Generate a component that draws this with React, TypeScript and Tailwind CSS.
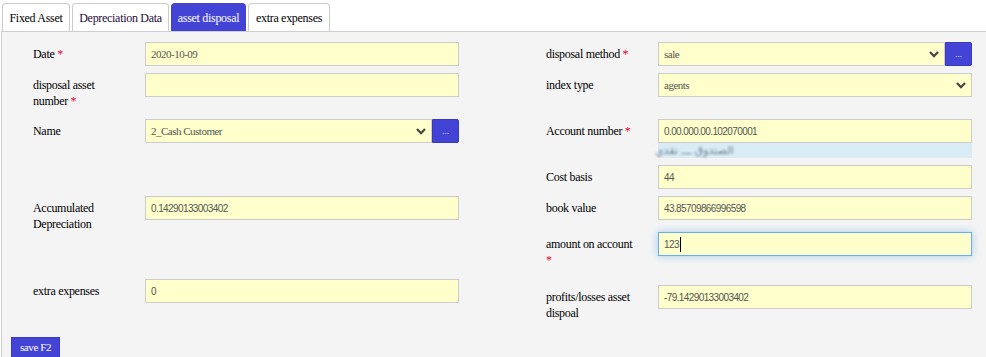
import React from "react";

const serif = "font-[family-name:Liberation_Serif,serif]";
const sans = "font-[family-name:Liberation_Sans,Arial,sans-serif]";

function Req() {
  return <span className="text-[#e4002b]"> *</span>;
}

function Label({ children }: { children: React.ReactNode }) {
  return (
    <div className={`w-[112px] shrink-0 pt-[4px] pr-[8px] text-[12px] leading-[16px] tracking-[-0.3px] text-black ${serif}`}>
      {children}
    </div>
  );
}

function Chevron() {
  return (
    <svg width="10" height="7" viewBox="0 0 10 7" className="shrink-0">
      <polyline points="1,1 5,5.2 9,1" fill="none" stroke="#444" strokeWidth="2.2" />
    </svg>
  );
}

function TextBox({ value, kind = "sans", focused = false }: { value: string; kind?: "sans" | "serif"; focused?: boolean }) {
  const font = kind === "sans" ? `${sans} text-[10px] tracking-[-0.6px]` : `${serif} text-[11px] tracking-[-0.5px]`;
  return (
    <div
      className={`flex h-[24px] w-[314px] items-center bg-[#ffffcc] pl-[5px] text-[#555] ${font} ${
        focused ? "border border-[#66afe9] shadow-[0_0_8px_rgba(102,175,233,0.6)]" : "border border-[#ccc]"
      }`}
    >
      <span>{value}</span>
      {focused && <span className="ml-[1px] h-[15px] w-[1px] bg-black" />}
    </div>
  );
}

function SelectBox({ value, button = false }: { value: string; button?: boolean }) {
  return (
    <div className="flex h-[24px] w-[314px]">
      <div
        className={`flex h-[24px] flex-1 items-center justify-between border border-[#ccc] bg-[#ffffcc] pl-[5px] pr-[5px] text-[11px] tracking-[-0.5px] text-[#555] ${serif}`}
      >
        <span>{value}</span>
        <Chevron />
      </div>
      {button && (
        <div className="flex h-[24px] w-[27px] shrink-0 items-center justify-center rounded-r-[2px] border border-[#3a3ac0] bg-[#4343d5] text-[9px] leading-none text-white">
          ...
        </div>
      )}
    </div>
  );
}

function Row({ label, children, className = "" }: { label: React.ReactNode; children: React.ReactNode; className?: string }) {
  return (
    <div className={`flex items-start ${className}`}>
      <Label>{label}</Label>
      {children}
    </div>
  );
}

export default function App() {
  const tabs = [
    { t: "Fixed Asset", w: "w-[68px]", active: false, color: "text-black" },
    { t: "Depreciation Data", w: "w-[97px]", active: false, color: "text-[#1f0a3a]" },
    { t: "asset disposal", w: "w-[75px]", active: true, color: "text-white" },
    { t: "extra expenses", w: "w-[82px]", active: false, color: "text-black" },
  ];
  return (
    <div className={`min-h-screen bg-white pl-[1px] pt-[3px] ${serif}`}>
      <div className="flex gap-[2px] pl-[1px]">
        {tabs.map((tb) => (
          <div
            key={tb.t}
            className={`flex h-[28px] items-center justify-center rounded-t-[4px] border border-b-0 text-[12px] tracking-[-0.3px] ${tb.w} ${tb.color} ${
              tb.active ? "border-[#4343d5] bg-[#4343d5]" : "border-[#ccc] bg-white"
            }`}
          >
            {tb.t}
          </div>
        ))}
      </div>
      <div className="h-[326px] border-l border-t border-[#cfcfcf] bg-[#f4f4f4]">
        <div className="flex items-start pt-[10px]">
          <div className="ml-[31px] flex w-[426px] flex-col">
            <Row label={<>Date<Req /></>}>
              <TextBox value="2020-10-09" kind="serif" />
            </Row>
            <Row className="mt-[7px] h-[36px]" label={<>disposal asset<br />number<Req /></>}>
              <TextBox value="" />
            </Row>
            <Row className="mt-[10px]" label="Name">
              <SelectBox value="2_Cash Customer" button />
            </Row>
            <Row className="mt-[53px] h-[36px]" label={<>Accumulated<br />Depreciation</>}>
              <TextBox value="0.14290133003402" />
            </Row>
            <Row className="mt-[47px]" label="extra  expenses">
              <TextBox value="0" />
            </Row>
          </div>
          <div className="ml-[87px] flex w-[426px] flex-col">
            <Row label={<>disposal method<Req /></>}>
              <SelectBox value="sale" button />
            </Row>
            <Row className="mt-[7px]" label="index type">
              <SelectBox value="agents" />
            </Row>
            <Row className="mt-[22px]" label={<>Account number<Req /></>}>
              <div className="flex flex-col">
                <TextBox value="0.00.000.00.102070001" />
                <div className="flex h-[15px] w-[314px] items-center bg-[#d9ebf5]">
                  <span
                    dir="rtl"
                    className="-ml-[3px] text-[11px] leading-none text-[#6d8593] blur-[0.9px] font-[family-name:DejaVu_Sans,sans-serif]"
                  >
                    الصندوق ـــ نقدي
                  </span>
                </div>
              </div>
            </Row>
            <Row className="mt-[7px]" label="Cost basis">
              <TextBox value="44" />
            </Row>
            <Row className="mt-[7px]" label="book value">
              <TextBox value="43.85709866996598" />
            </Row>
            <Row className="mt-[12px] h-[36px]" label={<>amount on account<br /><span className="text-[#e4002b]">*</span></>}>
              <TextBox value="123" focused />
            </Row>
            <Row className="mt-[17px] h-[36px]" label={<>profits/losses asset<br />dispoal</>}>
              <TextBox value="-79.14290133003402" />
            </Row>
          </div>
        </div>
        <div className="ml-[9px] mt-[16px] flex h-[22px] w-[49px] items-center justify-center border border-[#3a3ac0] bg-[#4343d5] pb-[2px] text-[11px] tracking-[-0.4px] text-white">
          save F2
        </div>
      </div>
    </div>
  );
}
